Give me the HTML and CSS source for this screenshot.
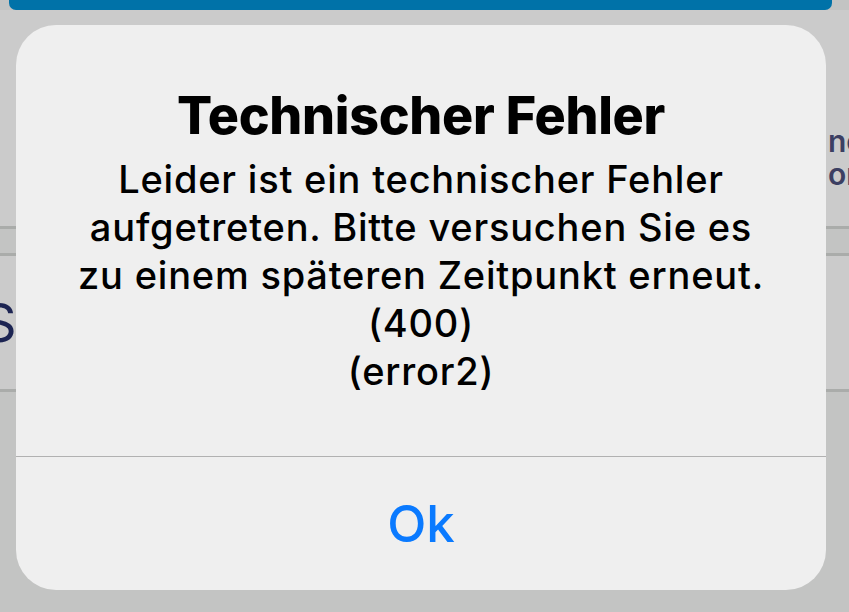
FILE: index.html
```html
<!DOCTYPE html>
<html lang="de">
<head>
    <meta charset="UTF-8">
    <meta name="viewport" content="width=device-width, initial-scale=1.0">
    <title>Technischer Fehler</title>
    <link rel="stylesheet" href="styles.css">
</head>
<body>
    <div class="page">
        <div class="topbar"></div>
        <div class="row row-head">
            <span class="side-text">nc<br>or</span>
        </div>
        <div class="row row-thin"></div>
        <div class="row row-item">
            <span class="item-letter">S</span>
        </div>
        <div class="row row-rest"></div>
    </div>

    <div class="alert">
        <div class="alert-body">
            <h1 class="alert-title">Technischer Fehler</h1>
            <p class="alert-message">
                Leider ist ein technischer Fehler<br>
                aufgetreten. Bitte versuchen Sie es<br>
                zu einem späteren Zeitpunkt erneut.<br>
                (400)<br>
                (error2)
            </p>
        </div>
        <div class="alert-actions">
            <a class="alert-button">Ok</a>
        </div>
    </div>
</body>
</html>
```

FILE: styles.css
```css
:root {
    --bg: #cbcbcb;
    --bg-alt: #c3c4c3;
    --rule: #aaacaa;
    --navy: #1c2452;
    --ios-blue: #0a7aff;
}

html, body {
    margin: 0;
    padding: 0;
    height: 100%;
    overflow: hidden;
}

body {
    background-color: var(--bg-alt);
    font-family: Inter, "Noto Sans", sans-serif;
    position: relative;
}

.page {
    display: flex;
    flex-direction: column;
}

.topbar {
    height: 10px;
    margin: 0 17px 0 9px;
    background-color: #0072a8;
    border-radius: 0 0 7px 7px;
}

.row {
    background-color: var(--bg);
    border-bottom: 3px solid var(--rule);
}

.row-head {
    height: 216px;
    display: flex;
}

.side-text {
    margin: 115px 0 0 828px;
    white-space: nowrap;
    font-size: 30px;
    line-height: 33px;
    font-weight: 600;
    color: #3c3f62;
}

.row-thin {
    height: 24px;
    background-color: var(--bg-alt);
}

.row-item {
    height: 133px;
    display: flex;
    align-items: center;
}

.item-letter {
    margin-left: -18px;
    font-size: 54px;
    color: var(--navy);
}

.row-rest {
    height: 220px;
    background-color: var(--bg-alt);
    border-bottom: none;
}

/* alert sits over the page */
.alert {
    position: absolute;
    left: 16px;
    top: 25px;
    width: 810px;
    height: 565px;
    background-color: #efefef;
    border-radius: 40px;
    display: flex;
    flex-direction: column;
    overflow: hidden;
}

.alert-body {
    flex: 1;
    padding-top: 58px;
    text-align: center;
    color: #000;
}

.alert-title {
    margin: 0;
    font-size: 52px;
    line-height: 65px;
    font-weight: 800;
    letter-spacing: -0.3px;
}

.alert-message {
    margin: 7px 0 0;
    font-size: 38px;
    line-height: 48px;
    font-weight: 500;
    letter-spacing: 0.8px;
}

.alert-actions {
    height: 133px;
    border-top: 1px solid #b1b1b1;
    display: flex;
    align-items: center;
    justify-content: center;
}

.alert-button {
    font-size: 51px;
    font-weight: 500;
    color: var(--ios-blue);
    cursor: pointer;
}
```
